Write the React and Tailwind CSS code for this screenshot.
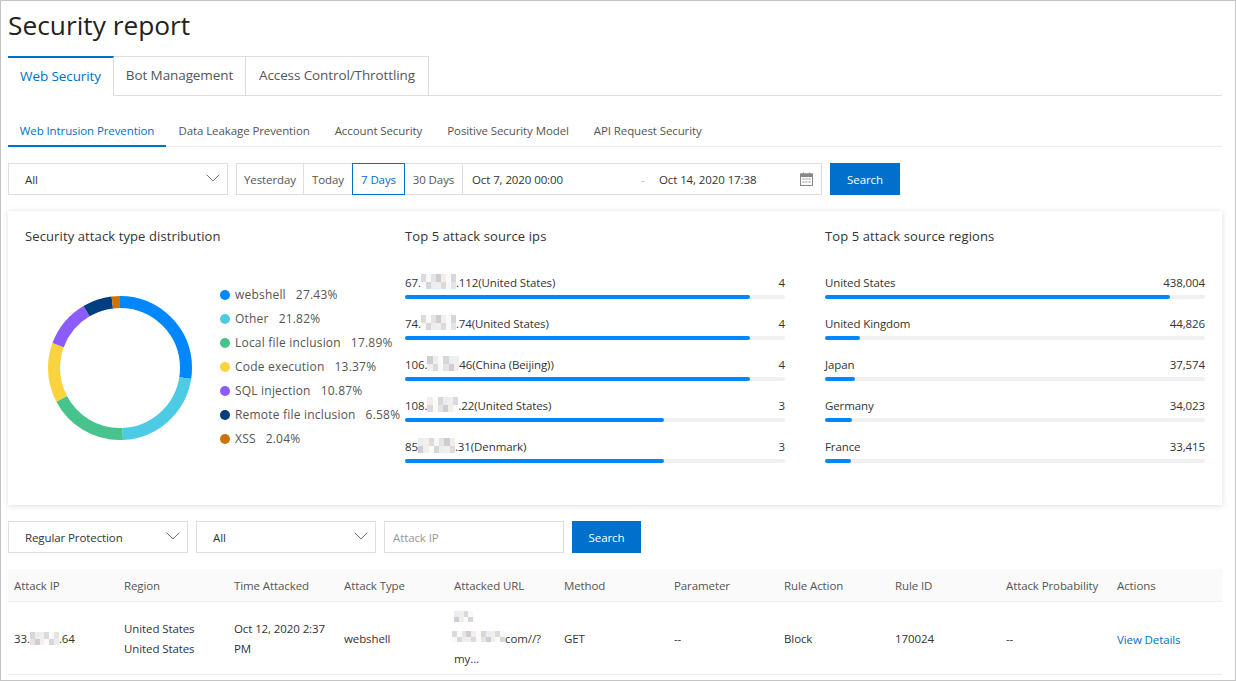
import { ChevronDown } from 'lucide-react';

const topTabs = [
  { label: 'Web Security', width: 'w-[106px]' },
  { label: 'Bot Management', width: 'w-[132px]' },
  { label: 'Access Control/Throttling', width: 'w-[183px]' },
];
const subTabs = ['Data Leakage Prevention', 'Account Security', 'Positive Security Model', 'API Request Security'];

const attackTypes = [
  { name: 'webshell', pct: 27.43, color: '#0087fb' },
  { name: 'Other', pct: 21.82, color: '#4dcbe4' },
  { name: 'Local file inclusion', pct: 17.89, color: '#47c38d' },
  { name: 'Code execution', pct: 13.37, color: '#fad33d' },
  { name: 'SQL injection', pct: 10.87, color: '#8c5cff' },
  { name: 'Remote file inclusion', pct: 6.58, color: '#003f7f' },
  { name: 'XSS', pct: 2.04, color: '#cc7408' },
];

// mosaic tones for the masked parts of the addresses
const tones = ['#f1efec', '#e9eef3', '#d9d6d6', '#fafafa', '#f3eee7', '#cfcdd3', '#e6e4e3', '#f8f9fb', '#dcdadd'];

const ips = [
  { pre: '67.', post: '.112(United States)', blur: 35, value: 4, pct: 90.8 },
  { pre: '74.', post: '.74(United States)', blur: 35, value: 4, pct: 90.8 },
  { pre: '106.', post: '46(China (Beijing))', blur: 32, value: 4, pct: 90.8 },
  { pre: '108.', post: '.22(United States)', blur: 31, value: 3, pct: 68.1 },
  { pre: '85', post: '.31(Denmark)', blur: 37, value: 3, pct: 68.1 },
];

const regions = [
  { name: 'United States', value: '438,004', pct: 90.8 },
  { name: 'United Kingdom', value: '44,826', pct: 9.2 },
  { name: 'Japan', value: '37,574', pct: 7.9 },
  { name: 'Germany', value: '34,023', pct: 7.1 },
  { name: 'France', value: '33,415', pct: 6.8 },
];

const columns = ['Attack IP', 'Region', 'Time Attacked', 'Attack Type', 'Attacked URL', 'Method', 'Parameter', 'Rule Action', 'Rule ID', 'Attack Probability', 'Actions'];

function Blur({ width, className }) {
  const cols = Math.round(width / 5);
  return (
    <span className={`inline-grid grid-rows-2 grid-flow-col align-top ${className}`} style={{ width }}>
      {Array.from({ length: cols * 2 }).map((_, i) => (
        <span key={i} style={{ backgroundColor: tones[(i * 4 + width) % tones.length] }} />
      ))}
    </span>
  );
}

function Donut() {
  const r = 66;
  const circ = 2 * Math.PI * r;
  let offset = 0;
  return (
    <svg width="146" height="146" viewBox="0 0 146 146" className="shrink-0">
      <g transform="rotate(-90 73 73)">
        {attackTypes.map((t) => {
          const len = (t.pct / 100) * circ;
          const seg = (
            <circle
              key={t.name}
              cx="73"
              cy="73"
              r={r}
              fill="none"
              stroke={t.color}
              strokeWidth="12"
              strokeDasharray={`${len} ${circ - len}`}
              strokeDashoffset={-offset}
            />
          );
          offset += len;
          return seg;
        })}
      </g>
    </svg>
  );
}

function Select({ label, width }) {
  return (
    <div className={`${width} h-8 pl-[16px] pr-[2px] border border-[#dedede] flex items-center justify-between text-[#333]`}>
      <span className="pt-px">{label}</span>
      <ChevronDown className="w-6 h-6 -mt-[2px] text-[#777]" strokeWidth={1} />
    </div>
  );
}

function SearchButton({ width }) {
  return (
    <button className={`${width} h-8 pt-px bg-[#0070cc] text-white flex items-center justify-center`}>Search</button>
  );
}

function CalendarIcon() {
  return (
    <svg width="13" height="14" viewBox="0 0 13 14" fill="none" stroke="#888" strokeWidth="1">
      <rect x="0.5" y="2" width="12" height="11.5" />
      <path d="M0.5 2h12v2.5h-12z" fill="#888" />
      <path d="M3.5 0.5v2M9.5 0.5v2" />
      <path d="M2.5 7h2M5.5 7h2M8.5 7h2M2.5 10h2M5.5 10h2M8.5 10h2" />
    </svg>
  );
}

function BarRow({ label, value, pct }) {
  return (
    <div className="h-[41px]">
      <div className="flex justify-between h-[18px] leading-[18px] text-[#333]">
        <span>{label}</span>
        <span>{value}</span>
      </div>
      <div className="h-1 mt-[3px] rounded-full bg-[#f0f0f0]">
        <div className="h-1 rounded-full bg-[#0087fb]" style={{ width: `${pct}%` }} />
      </div>
    </div>
  );
}

export default function App() {
  return (
    <div className="w-[1236px] h-[681px] overflow-hidden border border-[#c4c4c4] bg-white pl-[7px] pr-[13px] text-[11.5px] tracking-[-0.1px] text-[#333] font-['Open_Sans','Noto_Sans',sans-serif]">
      <h1 className="h-[55px] pt-[5px] text-[26.3px] leading-[38px] tracking-normal text-[#222]">Security report</h1>

      <div className="flex h-10 border-b border-[#dedede]">
        {topTabs.map((t, i) => (
          <div
            key={t.label}
            className={
              i === 0
                ? `${t.width} h-10 pb-[2px] border-t-2 border-t-[#0070cc] border-r border-r-[#dedede] bg-white flex items-center justify-center text-[13.5px] text-[#0070cc]`
                : `${t.width} h-[39px] pb-px border-t border-r border-[#dedede] flex items-center justify-center text-[13.5px] text-[#555]`
            }
          >
            {t.label}
          </div>
        ))}
      </div>

      <div className="flex h-[51px] pt-[21px] border-b border-[#eeeeee]">
        <div className="w-[158px] h-[30px] border-b-2 border-[#0070cc] text-center leading-[28px] text-[#0070cc]">Web Intrusion Prevention</div>
        {subTabs.map((t) => (
          <div key={t} className="px-[12.5px] leading-[28px] text-[#555]">{t}</div>
        ))}
      </div>

      <div className="flex mt-4 gap-2">
        <Select label="All" width="w-[220px]" />
        <div className="flex w-[586px] h-8 border border-[#dedede]">
          <div className="w-[67px] pt-px border-r border-[#dedede] flex items-center justify-center text-[#555]">Yesterday</div>
          <div className="w-[48px] pt-px flex items-center justify-center text-[#555]">Today</div>
          <div className="w-[53px] pt-px -my-px border border-[#0070cc] flex items-center justify-center text-[#0070cc]">7 Days</div>
          <div className="w-[58px] pt-px border-r border-[#dedede] flex items-center justify-center text-[#555]">30 Days</div>
          <div className="flex-1 flex items-center pl-[9px] pr-[8px]">
            <span className="w-[169px] pt-px">Oct 7, 2020 00:00</span>
            <span className="w-[18px] pt-px text-[#bbb]">-</span>
            <span className="flex-1 pt-px">Oct 14, 2020 17:38</span>
            <CalendarIcon />
          </div>
        </div>
        <SearchButton width="w-[70px]" />
      </div>

      <div className="mt-4 h-[294px] flex shadow-[0_1px_6px_rgba(0,0,0,0.14)] pl-[17px] pt-[15px]">
        <div className="w-[380px]">
          <div className="h-5 leading-5 text-[13px] tracking-[0.11px] text-[#333]">Security attack type distribution</div>
          <div className="flex mt-[50px]">
            <div className="ml-[22px] -mt-px">
              <Donut />
            </div>
            <div className="ml-[27px] -mt-[13px] text-xs tracking-[0.2px]">
              {attackTypes.map((t) => (
                <div key={t.name} className="flex items-center h-6 whitespace-nowrap">
                  <span className="w-[10px] h-[10px] rounded-full mr-[5px]" style={{ backgroundColor: t.color }} />
                  <span className="text-[#555]">{t.name}</span>
                  <span className="ml-[10px] text-[#555]">{t.pct}%</span>
                </div>
              ))}
            </div>
          </div>
        </div>
        <div className="w-[380px] mr-[40px]">
          <div className="h-5 leading-5 text-[13px] tracking-[0.11px] text-[#333]">Top 5 attack source ips</div>
          <div className="mt-[28px]">
            {ips.map((row) => (
              <BarRow
                key={row.pre}
                label={<>{row.pre}<Blur width={row.blur} className="h-[15px]" />{row.post}</>}
                value={row.value}
                pct={row.pct}
              />
            ))}
          </div>
        </div>
        <div className="w-[380px]">
          <div className="h-5 leading-5 text-[13px] tracking-[0.11px] text-[#333]">Top 5 attack source regions</div>
          <div className="mt-[28px]">
            {regions.map((row) => (
              <BarRow key={row.name} label={row.name} value={row.value} pct={row.pct} />
            ))}
          </div>
        </div>
      </div>

      <div className="flex gap-2 mt-4">
        <Select label="Regular Protection" width="w-[180px]" />
        <Select label="All" width="w-[180px]" />
        <div className="w-[180px] h-8 pt-px border border-[#dedede] flex items-center pl-2 text-[#999]">Attack IP</div>
        <SearchButton width="w-[69px]" />
      </div>

      <div className="mt-4">
        <div className="grid grid-cols-[110px_110px_110px_110px_110px_110px_110px_111px_111px_111px_1fr] h-[33px] pt-[2px] items-center bg-[#fafafa] border-b border-[#eeeeee] text-[#555] pl-[6px]">
          {columns.map((c) => (
            <div key={c} className="whitespace-nowrap">{c}</div>
          ))}
        </div>
        <div className="grid grid-cols-[110px_110px_110px_110px_110px_110px_110px_111px_111px_111px_1fr] h-[73px] pt-[2px] items-center border-b border-[#eeeeee] text-[#333] pl-[6px] leading-5">
          <div>33.<Blur width={29} className="h-[13px] mt-[3px]" />.64</div>
          <div>United States<br />United States</div>
          <div className="pr-3">Oct 12, 2020 2:37 PM</div>
          <div>webshell</div>
          <div className="pr-3">
            <div className="h-5"><Blur width={19} className="h-[11px] mt-[2px]" /></div>
            <div className="h-5 -ml-0.5"><Blur width={53} className="h-[11px] mt-[2px]" />com//?</div>
            <div className="h-5">my...</div>
          </div>
          <div>GET</div>
          <div>--</div>
          <div>Block</div>
          <div>170024</div>
          <div>--</div>
          <div className="mt-px text-[#0070cc]">View Details</div>
        </div>
      </div>
    </div>
  );
}
